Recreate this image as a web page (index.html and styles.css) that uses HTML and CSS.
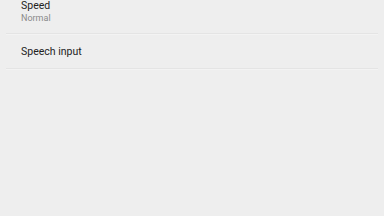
FILE: index.html
```html
<!DOCTYPE html>
<html lang="en">
<head>
    <meta charset="UTF-8">
    <meta name="viewport" content="width=device-width, initial-scale=1.0">
    <title>Settings</title>
    <link rel="stylesheet" href="styles.css">
</head>
<body>

    <div class="settings-list">

        <div class="setting-row first">
            <div class="setting-title">Speed</div>
            <div class="setting-summary">Normal</div>
        </div>

        <div class="setting-row">
            <div class="setting-title">Speech input</div>
        </div>

    </div>

</body>
</html>
```

FILE: styles.css
```css
*
{
    margin: 0;
    padding: 0;
    box-sizing: border-box;
}

body
{
    background: #eeeeee;
    font-family: Roboto, "Liberation Sans", sans-serif;
    width: 384px;
    height: 216px;
    overflow: hidden;
}

.settings-list
{
    display: flex;
    flex-direction: column;
}

.setting-row
{
    display: flex;
    flex-direction: column;
    justify-content: center;
    height: 35px;
    margin: 0 6px;
    padding-left: 15px;
    padding-top: 2px;
    border-bottom: 1px solid #e4e4e4;
    box-shadow: 0 1px 0 #f3f3f3;
}

.setting-row.first
{
    justify-content: flex-start;
    height: 34px;
    padding-top: 0;
}

.setting-title
{
    font-size: 10.5px;
    line-height: 12px;
    color: #222222;
}

.setting-summary
{
    font-size: 9px;
    line-height: 12px;
    color: #8a8a8a;
}
```
